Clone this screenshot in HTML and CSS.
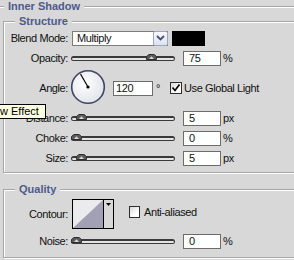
FILE: index.html
```html
<!DOCTYPE html>
<html>
<head>
<meta charset="utf-8">
<link rel="stylesheet" href="styles.css">
</head>
<body>
<fieldset class="outer">
  <legend class="title">Inner Shadow</legend>
  <fieldset class="group structure">
    <legend class="title group-title">Structure</legend>
    <div class="row">
      <span class="label">Blend Mode:</span>
      <div class="select">
        <span class="select-value">Multiply</span>
        <span class="select-btn"><svg width="9" height="6" viewBox="0 0 9 6"><path d="M1 1l3.5 3.5L8 1" fill="none" stroke="#44507a" stroke-width="1.8"/></svg></span>
      </div>
      <span class="swatch"></span>
    </div>
    <div class="row">
      <span class="label">Opacity:</span>
      <div class="slider"><span class="track"></span><svg class="thumb" style="left:75px" viewBox="0 0 11 6"><path d="M0.5 5.5V2.5L3 0.5H8L10.5 2.5V5.5Z" fill="#5b5b5b" stroke="#2e2e2e"/><path d="M3 5L5.5 2.2L8 5Z" fill="#d6d6d6"/></svg></div>
      <span class="field">75</span><span class="unit">%</span>
    </div>
    <div class="row row-angle">
      <span class="label">Angle:</span>
      <svg class="dial" width="36" height="36" viewBox="0 0 36 36">
        <defs><radialGradient id="dg" cx="0.4" cy="0.4" r="0.7"><stop offset="0" stop-color="#ffffff"/><stop offset="1" stop-color="#dfe1e8"/></radialGradient></defs>
        <circle cx="18" cy="18" r="16.3" fill="url(#dg)" stroke="#3e4566" stroke-width="1.6"/>
        <line x1="18" y1="18" x2="10.5" y2="5" stroke="#000" stroke-width="1.2"/>
        <circle cx="18" cy="18" r="1.6" fill="#000"/>
      </svg>
      <span class="field field-angle">120</span><span class="deg">°</span>
      <span class="check"><svg width="10" height="10" viewBox="0 0 10 10"><path d="M1.5 4.5l2.5 3L8.5 1.5" fill="none" stroke="#000" stroke-width="1.7"/></svg></span>
      <span class="check-label">Use Global Light</span>
    </div>
    <div class="row">
      <span class="label">Distance:</span>
      <div class="slider"><span class="track"></span><svg class="thumb" style="left:5px" viewBox="0 0 11 6"><path d="M0.5 5.5V2.5L3 0.5H8L10.5 2.5V5.5Z" fill="#5b5b5b" stroke="#2e2e2e"/><path d="M3 5L5.5 2.2L8 5Z" fill="#d6d6d6"/></svg></div>
      <span class="field">5</span><span class="unit">px</span>
    </div>
    <div class="row">
      <span class="label">Choke:</span>
      <div class="slider"><span class="track"></span><svg class="thumb" style="left:0px" viewBox="0 0 11 6"><path d="M0.5 5.5V2.5L3 0.5H8L10.5 2.5V5.5Z" fill="#5b5b5b" stroke="#2e2e2e"/><path d="M3 5L5.5 2.2L8 5Z" fill="#d6d6d6"/></svg></div>
      <span class="field">0</span><span class="unit">%</span>
    </div>
    <div class="row">
      <span class="label">Size:</span>
      <div class="slider"><span class="track"></span><svg class="thumb" style="left:5px" viewBox="0 0 11 6"><path d="M0.5 5.5V2.5L3 0.5H8L10.5 2.5V5.5Z" fill="#5b5b5b" stroke="#2e2e2e"/><path d="M3 5L5.5 2.2L8 5Z" fill="#d6d6d6"/></svg></div>
      <span class="field">5</span><span class="unit">px</span>
    </div>
  </fieldset>
  <fieldset class="group quality">
    <legend class="title group-title">Quality</legend>
    <div class="row row-contour">
      <span class="label">Contour:</span>
      <div class="contour">
        <span class="contour-preview"><svg width="30" height="28" viewBox="0 0 30 28" preserveAspectRatio="none"><rect width="30" height="28" fill="#ebebee"/><path d="M0 28L30 0V28Z" fill="#a2a0b5"/></svg></span>
        <span class="contour-arrow"><svg width="5" height="3" viewBox="0 0 5 3"><path d="M0 0H5L2.5 3Z" fill="#000"/></svg></span>
      </div>
      <span class="check check-anti"></span>
      <span class="check-label anti-label">Anti-aliased</span>
    </div>
    <div class="row">
      <span class="label">Noise:</span>
      <div class="slider"><span class="track"></span><svg class="thumb" style="left:0px" viewBox="0 0 11 6"><path d="M0.5 5.5V2.5L3 0.5H8L10.5 2.5V5.5Z" fill="#5b5b5b" stroke="#2e2e2e"/><path d="M3 5L5.5 2.2L8 5Z" fill="#d6d6d6"/></svg></div>
      <span class="field">0</span><span class="unit">%</span>
    </div>
  </fieldset>
</fieldset>
<div class="tooltip">w Effect</div>
</body>
</html>
```

FILE: styles.css
```css
* { box-sizing: border-box; }
html, body { margin: 0; padding: 0; }
body {
  position: relative;
  width: 294px;
  height: 260px;
  overflow: hidden;
  background: #d7d8d7;
  font-family: "Liberation Sans", Arial, sans-serif;
  font-size: 11px;
  letter-spacing: -0.4px;
  color: #111;
}
.outer {
  margin: 0 0 0 -2px;
  padding: 0 0 20px 4px;
  width: 340px;
  min-inline-size: 0;
  border: 1px solid #a5a6a5;
  box-shadow: inset 1px 1px 0 #fff, 1px 1px 0 #fff;
}
.title {
  margin-left: 1px;
  padding: 0 4px;
  font-weight: bold;
  font-size: 11px;
  line-height: 13px;
  letter-spacing: 0;
  color: #4f5a8c;
  background: #d7d8d7;
}
.group {
  margin: 2px 0 0;
  padding: 0 0 4px;
  width: 320px;
  min-inline-size: 0;
  border: 1px solid #a5a6a5;
  box-shadow: inset 1px 1px 0 #fff, 1px 1px 0 #fff;
}
.group-title { margin-left: 11px; }
.quality { margin-top: 10px; padding-bottom: 6px; }
.row {
  display: flex;
  align-items: center;
  height: 20px;
  white-space: nowrap;
}
.row-angle { height: 40px; }
.row-contour { height: 35px; }
.label {
  flex: none;
  width: 64px;
  text-align: right;
}
.select {
  display: flex;
  align-items: center;
  width: 96px;
  height: 15px;
  margin-left: 4px;
  border: 1px solid #7d7d7d;
  background: #fff;
}
.select-value { flex: 1; padding-left: 4px; line-height: 13px; }
.select-btn {
  display: flex;
  align-items: center;
  justify-content: center;
  width: 15px;
  height: 15px;
  margin-right: -1px;
  border: 1px solid #9aa8c6;
  border-radius: 2px;
  background: linear-gradient(#f6f8fc, #dde3ef);
}
.swatch {
  width: 33px;
  height: 15px;
  margin-left: 4px;
  background: #000;
}
.slider {
  position: relative;
  display: flex;
  align-items: center;
  width: 104px;
  height: 8px;
  margin-left: 3px;
}
.track {
  flex: 1;
  height: 5px;
  border: 1px solid #3a3a3a;
  border-top-width: 2px;
  border-radius: 3px;
  background: #e4e4e4;
}
.thumb {
  position: absolute;
  top: 0;
  width: 11px;
  height: 6px;
}
.field {
  width: 38px;
  height: 15px;
  margin-left: 8px;
  padding-left: 5px;
  border: 1px solid #6c6c6c;
  background: #fff;
  line-height: 13px;
}
.unit { margin-left: 2px; }
.dial { margin-left: 2px; margin-bottom: 2px; }
.field-angle { width: 40px; margin-left: 7px; padding-left: 2px; }
.deg { margin-left: 3px; }
.check {
  display: flex;
  align-items: center;
  justify-content: center;
  flex: none;
  width: 12px;
  height: 12px;
  margin-left: 10px;
  border: 1px solid #2e2e2e;
  background: linear-gradient(135deg, #d9d9d9, #fff 70%);
}
.check-label { margin-left: 2px; }
.contour {
  display: flex;
  width: 42px;
  height: 30px;
  margin-left: 4px;
  border: 1px solid #000;
}
.contour-preview {
  display: block;
  width: 31px;
  height: 28px;
  border-right: 1px solid #000;
}
.contour-preview svg { display: block; }
.contour-arrow {
  flex: 1;
  display: flex;
  justify-content: center;
  padding-top: 3px;
}
.contour-arrow svg { display: block; }
.check-anti { margin-left: 15px; margin-bottom: 3px; width: 11px; }
.anti-label { margin-left: 4px; margin-bottom: 3px; }
.tooltip {
  position: absolute;
  left: -1px;
  top: 104px;
  width: 47px;
  height: 15px;
  border: 1px solid #000;
  background: #ffffe1;
  color: #000;
  font-size: 11px;
  letter-spacing: 0;
  line-height: 13px;
  white-space: nowrap;
}
```
